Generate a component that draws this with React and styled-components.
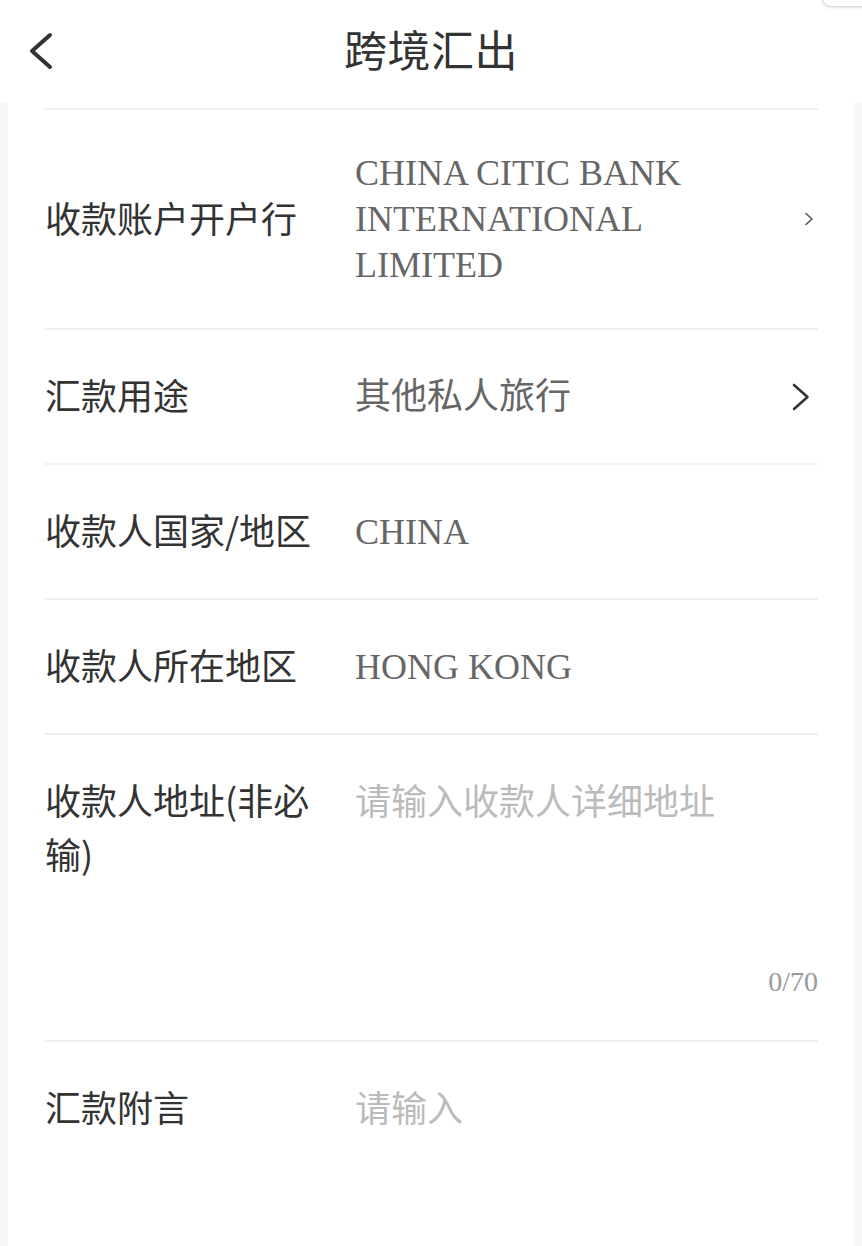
import React from "react";
import styled, { createGlobalStyle } from "styled-components";

const GlobalStyle = createGlobalStyle`
  html, body {
    margin: 0;
    padding: 0;
    background: #f6f7f7;
  }
  * {
    box-sizing: border-box;
  }
`;

const Page = styled.div`
  position: relative;
  min-height: 100vh;
  background: #f6f7f7;
  overflow: hidden;
`;

const NavBar = styled.header`
  height: 103px;
  background: #ffffff;
  display: grid;
  grid-template-columns: 1fr auto 1fr;
  align-items: center;
`;

const BackButton = styled.button`
  justify-self: start;
  margin-left: 27px;
  padding: 0 0 2px;
  border: none;
  background: none;
  display: flex;
  align-items: center;
  cursor: pointer;
`;

const Title = styled.h1`
  margin: 0;
  padding-bottom: 7px;
  font-family: "Noto Sans CJK SC", sans-serif;
  font-size: 43px;
  font-weight: 400;
  color: #333333;
  letter-spacing: 0.5px;
  line-height: 1;
`;

const FloatingTab = styled.div`
  position: absolute;
  top: -32px;
  right: -12px;
  width: 52px;
  height: 39px;
  border: 1px solid #dcdcdc;
  border-radius: 9px;
  background: #ffffff;
  box-shadow: 0 1px 3px rgba(0, 0, 0, 0.12);
`;

const Card = styled.main`
  margin: 0 8px;
  padding: 5px 36px 0 37px;
  background: #ffffff;
  min-height: calc(100vh - 103px);
`;

const Row = styled.div`
  display: flex;
  align-items: ${(p) => (p.$top ? "flex-start" : "center")};
  gap: 20px;
  padding: 37px 0;
  border-top: 2px solid #f0f0f0;
`;

const Label = styled.div`
  flex: 0 0 290px;
  padding-bottom: 5px;
  font-family: "Noto Sans CJK SC", sans-serif;
  font-size: 36px;
  line-height: 54px;
  color: #333333;
`;

const Value = styled.div`
  flex: 1;
  min-width: 0;
  padding: 3px 0;
  font-family: "Liberation Serif", "Noto Sans CJK SC", serif;
  font-size: 36px;
  line-height: 46px;
  color: #666666;
`;

const Trail = styled.div`
  flex: 0 0 26px;
  display: flex;
  justify-content: flex-end;
  align-items: center;
`;

const Field = styled.div`
  flex: 1;
  min-width: 0;
  display: flex;
  flex-direction: column;
`;

const TextArea = styled.textarea`
  display: block;
  width: 100%;
  height: ${(p) => p.$height}px;
  margin: 0;
  padding: 0;
  border: none;
  outline: none;
  resize: none;
  background: transparent;
  font-family: "Noto Sans CJK SC", sans-serif;
  font-size: 36px;
  line-height: 54px;
  color: #333333;

  &::placeholder {
    color: #bbbbbb;
  }
`;

const Counter = styled.div`
  align-self: flex-end;
  font-family: "Liberation Serif", serif;
  font-size: 28px;
  line-height: 42px;
  color: #999999;
`;

const ChevronIcon = styled.svg`
  display: block;
  margin-right: ${(p) => p.$inset}px;
  fill: none;
  stroke: ${(p) => p.$color};
  stroke-linecap: round;
  stroke-linejoin: round;
`;

function Chevron({ small }) {
  if (small) {
    return (
      <ChevronIcon $inset={4} $color="#555555" width="10" height="14" viewBox="0 0 10 14" strokeWidth="1.6">
        <polyline points="2,1.5 8,7 2,12.5" />
      </ChevronIcon>
    );
  }
  return (
    <ChevronIcon $inset={8} $color="#333333" width="18" height="28" viewBox="0 0 18 28" strokeWidth="2.6">
      <polyline points="2,2 15.5,14 2,26" />
    </ChevronIcon>
  );
}

function BackArrow() {
  return (
    <svg width="28" height="38" viewBox="0 0 28 38" fill="none" stroke="#333333" strokeWidth="4" strokeLinecap="round" strokeLinejoin="round">
      <polyline points="23,3 5,19 23,35" />
    </svg>
  );
}

const rows = [
  { label: "收款账户开户行", value: "CHINA CITIC BANK INTERNATIONAL LIMITED", chevron: "small" },
  { label: "汇款用途", value: "其他私人旅行", chevron: "large" },
  { label: "收款人国家/地区", value: "CHINA" },
  { label: "收款人所在地区", value: "HONG KONG" },
];

export default function App() {
  return (
    <>
      <GlobalStyle />
      <Page>
        <NavBar>
          <BackButton aria-label="返回">
            <BackArrow />
          </BackButton>
          <Title>跨境汇出</Title>
          <span />
        </NavBar>
        <FloatingTab />
        <Card>
          {rows.map((r) => (
            <Row key={r.label}>
              <Label>{r.label}</Label>
              <Value>{r.value}</Value>
              {r.chevron && (
                <Trail>
                  <Chevron small={r.chevron === "small"} />
                </Trail>
              )}
            </Row>
          ))}
          <Row $top>
            <Label>收款人地址(非必输)</Label>
            <Field>
              <TextArea $height={189} placeholder="请输入收款人详细地址" maxLength={70} />
              <Counter>0/70</Counter>
            </Field>
          </Row>
          <Row $top>
            <Label>汇款附言</Label>
            <Field>
              <TextArea $height={170} placeholder="请输入" />
            </Field>
          </Row>
        </Card>
      </Page>
    </>
  );
}
